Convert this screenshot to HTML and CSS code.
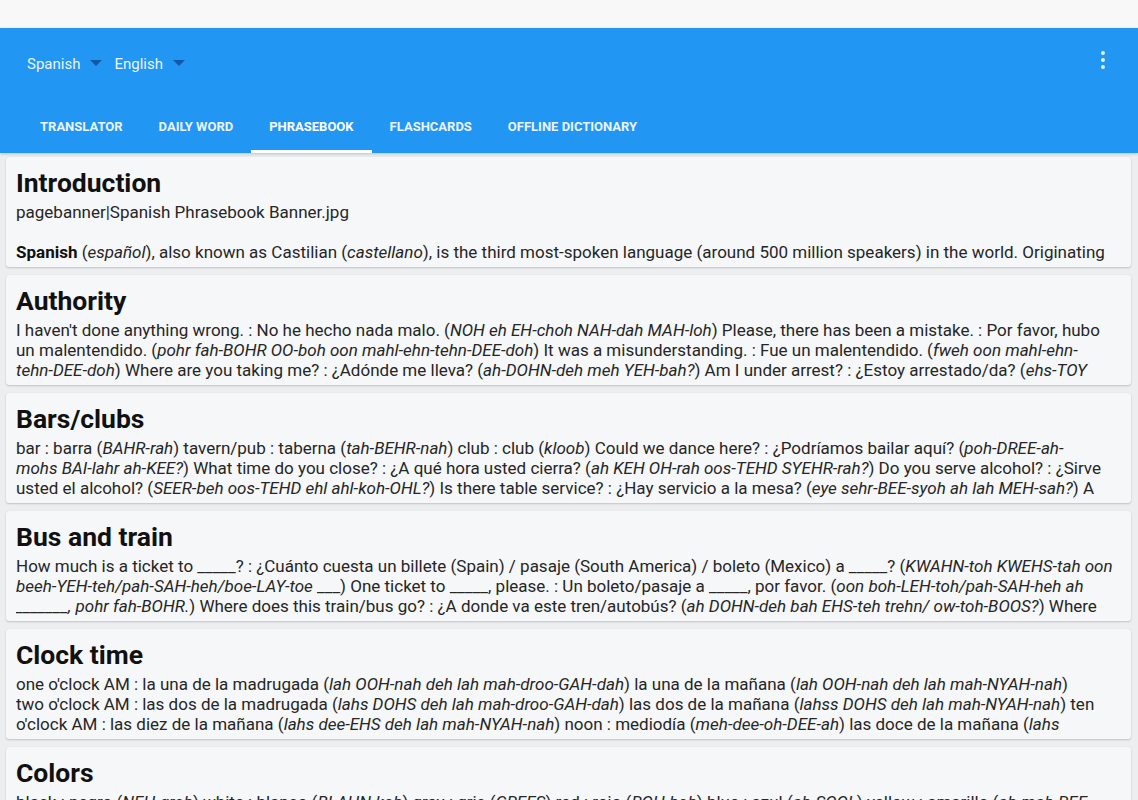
FILE: index.html
```html
<!DOCTYPE html>
<html>
<head>
<meta charset="utf-8">
<link rel="stylesheet" href="styles.css">
</head>
<body>
<div class="status"></div>
<header class="appbar">
  <div class="toolbar">
    <div class="spinner">Spanish<span class="caret"></span></div>
    <div class="spinner">English<span class="caret"></span></div>
    <div class="spacer"></div>
    <div class="overflow"><span></span><span></span><span></span></div>
  </div>
  <nav class="tabs">
    <div class="tab">TRANSLATOR</div>
    <div class="tab">DAILY WORD</div>
    <div class="tab active">PHRASEBOOK</div>
    <div class="tab">FLASHCARDS</div>
    <div class="tab">OFFLINE DICTIONARY</div>
  </nav>
</header>
<main class="list">
  <section class="card">
    <h2>Introduction</h2>
    <div class="line">pagebanner|Spanish Phrasebook Banner.jpg</div>
    <div class="line">&nbsp;</div>
    <div class="line"><b>Spanish</b> (<i>español</i>), also known as Castilian (<i>castellano</i>), is the third most-spoken language (around 500 million speakers) in the world. Originating</div>
  </section>
  <section class="card">
    <h2>Authority</h2>
    <div class="line">I haven't done anything wrong. : No he hecho nada malo. (<i>NOH eh EH-choh NAH-dah MAH-loh</i>) Please, there has been a mistake. : Por favor, hubo</div>
    <div class="line">un malentendido. (<i>pohr fah-BOHR OO-boh oon mahl-ehn-tehn-DEE-doh</i>) It was a misunderstanding. : Fue un malentendido. (<i>fweh oon mahl-ehn-</i></div>
    <div class="line"><i>tehn-DEE-doh</i>) Where are you taking me? : ¿Adónde me lleva? (<i>ah-DOHN-deh meh YEH-bah?</i>) Am I under arrest? : ¿Estoy arrestado/da? (<i>ehs-TOY</i></div>
  </section>
  <section class="card">
    <h2>Bars/clubs</h2>
    <div class="line">bar : barra (<i>BAHR-rah</i>) tavern/pub : taberna (<i>tah-BEHR-nah</i>) club : club (<i>kloob</i>) Could we dance here? : ¿Podríamos bailar aquí? (<i>poh-DREE-ah-</i></div>
    <div class="line"><i>mohs BAI-lahr ah-KEE?</i>) What time do you close? : ¿A qué hora usted cierra? (<i>ah KEH OH-rah oos-TEHD SYEHR-rah?</i>) Do you serve alcohol? : ¿Sirve</div>
    <div class="line">usted el alcohol? (<i>SEER-beh oos-TEHD ehl ahl-koh-OHL?</i>) Is there table service? : ¿Hay servicio a la mesa? (<i>eye sehr-BEE-syoh ah lah MEH-sah?</i>) A</div>
  </section>
  <section class="card">
    <h2>Bus and train</h2>
    <div class="line">How much is a ticket to _____? : ¿Cuánto cuesta un billete (Spain) / pasaje (South America) / boleto (Mexico) a _____? (<i>KWAHN-toh KWEHS-tah oon</i></div>
    <div class="line"><i>beeh-YEH-teh/pah-SAH-heh/boe-LAY-toe</i> ___) One ticket to _____, please. : Un boleto/pasaje a _____, por favor. (<i>oon boh-LEH-toh/pah-SAH-heh ah</i></div>
    <div class="line"><i>_______, pohr fah-BOHR.</i>) Where does this train/bus go? : ¿A donde va este tren/autobús? (<i>ah DOHN-deh bah EHS-teh trehn/ ow-toh-BOOS?</i>) Where</div>
  </section>
  <section class="card">
    <h2>Clock time</h2>
    <div class="line">one o'clock AM : la una de la madrugada (<i>lah OOH-nah deh lah mah-droo-GAH-dah</i>) la una de la mañana (<i>lah OOH-nah deh lah mah-NYAH-nah</i>)</div>
    <div class="line">two o'clock AM : las dos de la madrugada (<i>lahs DOHS deh lah mah-droo-GAH-dah</i>) las dos de la mañana (<i>lahss DOHS deh lah mah-NYAH-nah</i>) ten</div>
    <div class="line">o'clock AM : las diez de la mañana (<i>lahs dee-EHS deh lah mah-NYAH-nah</i>) noon : mediodía (<i>meh-dee-oh-DEE-ah</i>) las doce de la mañana (<i>lahs</i></div>
  </section>
  <section class="card">
    <h2>Colors</h2>
    <div class="line">black : negro (<i>NEH-groh</i>) white : blanco (<i>BLAHN-koh</i>) gray : gris (<i>GREES</i>) red : rojo (<i>ROH-hoh</i>) blue : azul (<i>ah-SOOL</i>) yellow : amarillo (<i>ah-mah-REE-</i></div>
  </section>
</main>
</body>
</html>
```
FILE: styles.css
```css
* { box-sizing: border-box; }
html, body { margin: 0; padding: 0; }
body {
  width: 1138px;
  height: 800px;
  overflow: hidden;
  background: #eceeef;
  font-family: Roboto, "Noto Sans", "Liberation Sans", sans-serif;
}
.status {
  height: 28px;
  background: #f8f8f8;
}
.appbar {
  background: #2196f3;
  color: #fff;
  height: 125px;
  display: flex;
  flex-direction: column;
  box-shadow: 0 1px 3px rgba(0,0,0,0.2);
  position: relative;
  z-index: 1;
}
.toolbar {
  height: 72px;
  display: flex;
  align-items: center;
  padding: 0 24px 0 27px;
  gap: 12px;
}
.spinner {
  font-size: 15px;
  display: flex;
  align-items: center;
  gap: 10px;
  color: #eaf4fe;
}
.caret {
  width: 0;
  height: 0;
  border-left: 6px solid transparent;
  border-right: 6px solid transparent;
  border-top: 6px solid #1258a6;
  margin-top: -2px;
}
.spacer { flex: 1; }
.overflow {
  display: flex;
  flex-direction: column;
  gap: 2.5px;
  padding-right: 9px;
  margin-top: -8px;
}
.overflow span {
  width: 4.5px;
  height: 4.5px;
  border-radius: 50%;
  background: #dff2ff;
}
.tabs {
  flex: 1;
  display: flex;
  padding-left: 22px;
  align-items: stretch;
}
.tab {
  padding: 3px 18px 0;
  display: flex;
  align-items: center;
  font-size: 13px;
  font-weight: 700;
  color: #eaf4fe;
  border-bottom: 3px solid transparent;
}
.tab.active {
  border-bottom-color: #ffffff;
  color: #ffffff;
}
.list {
  display: flex;
  flex-direction: column;
  gap: 8px;
  padding: 4px 7px 0 6px;
}
.card {
  background: #f5f7f8;
  border-radius: 3px;
  box-shadow: 0 1px 2px rgba(0,0,0,0.18), 0 0 1px rgba(0,0,0,0.08);
  padding: 8px 10px 8px 10px;
  height: 110px;
  overflow: hidden;
  flex: none;
}
.card h2 {
  margin: 0 0 2px;
  font-size: 26.5px;
  font-weight: 700;
  line-height: 35px;
  color: #111;
}
.line {
  font-size: 17px;
  line-height: 20px;
  color: #262626;
  white-space: nowrap;
  overflow: hidden;
}
.line b { font-weight: 700; color: #111; }
```
